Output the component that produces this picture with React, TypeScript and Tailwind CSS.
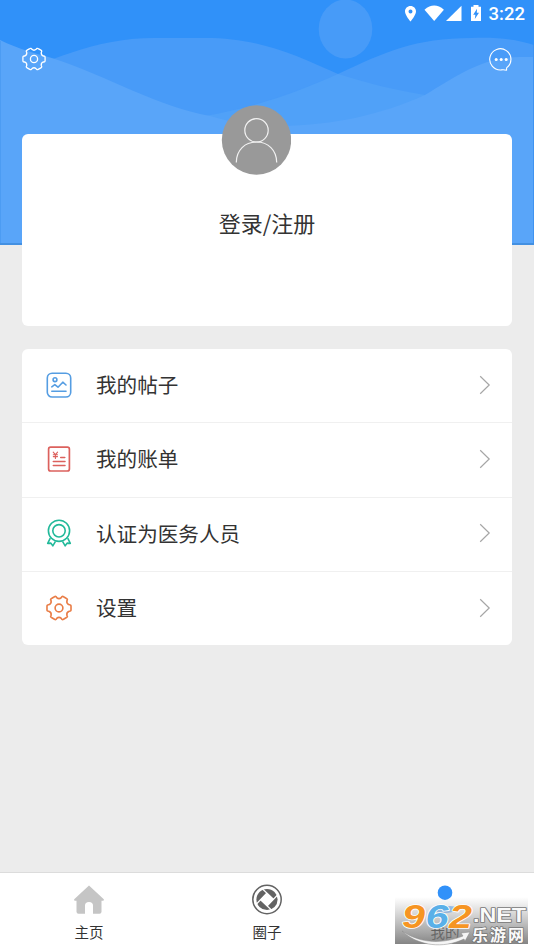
import type { ReactNode } from "react";
import clsx from "clsx";

// Six rounded teeth around (12, 12)
function buildGearPath() {
  const point = (radius: number, degrees: number) => {
    const angle = (degrees * Math.PI) / 180;
    return `${(12 + radius * Math.cos(angle)).toFixed(2)} ${(12 + radius * Math.sin(angle)).toFixed(2)}`;
  };
  let path = `M${point(9.9, -17.5)}`;
  for (let a = 0; a < 360; a += 60) {
    path += ` Q${point(11.6, a - 16)} ${point(11.2, a - 8)}`;
    path += ` L${point(11.2, a + 8)} Q${point(11.6, a + 16)} ${point(9.9, a + 17.5)}`;
    path += ` Q${point(7.8, a + 30)} ${point(9.9, a + 42.5)}`;
  }
  return path + " Z";
}

const gearPath = buildGearPath();

function GearIcon({ className, strokeWidth = 1.5 }: { className?: string; strokeWidth?: number }) {
  return (
    <svg viewBox="0 0 24 24" className={className} fill="none" stroke="currentColor" strokeWidth={strokeWidth} strokeLinejoin="round">
      <path d={gearPath} />
      <circle cx="12" cy="12" r="3.6" />
    </svg>
  );
}

function PostIcon() {
  return (
    <svg viewBox="0 0 26 26" className="w-[26px] h-[26px]" fill="none" stroke="#559de2" strokeWidth="1.6" strokeLinecap="round" strokeLinejoin="round">
      <rect x="1.3" y="1.2" width="23.4" height="23.8" rx="4.8" />
      <circle cx="9" cy="7.7" r="1.9" />
      <path d="M5.8 14.8 L8.8 12.6 L12 15.2 L16.8 10.2 L20 13" />
      <path d="M5.8 19.2 H20" />
    </svg>
  );
}

function BillIcon() {
  return (
    <svg viewBox="0 0 26 26" className="w-[26px] h-[26px]" fill="none" stroke="#dc615d" strokeWidth="1.5" strokeLinecap="round">
      <rect x="2.6" y="1.2" width="20.8" height="23.8" rx="2" strokeWidth="1.7" />
      <path d="M7.2 6.2 L9.4 8.6 L11.6 6.2 M9.4 8.6 V12.4 M7.3 8.8 H11.5 M7.3 10.6 H11.5" strokeWidth="1.1" />
      <path d="M14.7 11.4 H18.8 M7.3 15.4 H19 M7.3 19.4 H19" />
    </svg>
  );
}

function MedalIcon() {
  return (
    <svg viewBox="0 0 26 28" className="w-[26px] h-[28px]" fill="none" stroke="#22b99a" strokeWidth="1.6" strokeLinejoin="round">
      <circle cx="13" cy="11.8" r="10.6" />
      <circle cx="13" cy="11.8" r="6.2" />
      <path d="M4.3 19.2 L1.7 24.4 L4.9 24.1 L6.8 26.8 L9.5 22.3" />
      <path d="M21.7 19.2 L24.3 24.4 L21.1 24.1 L19.2 26.8 L16.5 22.3" />
    </svg>
  );
}

function ChevronIcon() {
  return (
    <svg viewBox="0 0 12 20" className="w-3 h-5" fill="none" stroke="#a6a6a6" strokeWidth="1.2">
      <path d="M1.2 1.3 L10.2 10 L1.2 18.7" />
    </svg>
  );
}

function HeaderBackground() {
  return (
    <svg viewBox="0 0 534 245" className="absolute left-0 top-0 w-[534px] h-[245px]">
      <rect width="534" height="245" fill="#3091f9" />
      <ellipse cx="345.5" cy="29" rx="26.8" ry="29.5" fill="#479bf8" />
      <path d="M0 78 C50 63 90 38 155 38 H205 C260 38 295 55 338 74 C370 84 395 90 425 95 L460 160 H0 Z" fill="#489bf8" />
      <path d="M190 120 C250 108 290 94 338 74 C385 52 415 38 472 38 C500 37 518 40 534 45 V160 H190 Z" fill="#489bf8" />
      <path d="M205 116 C260 106 295 93 338 74 C370 84 395 90 425 95 L400 140 H205 Z" fill="#50a1f8" />
      <path d="M0 40 C18 49 38 54 55 59 C105 75 158 107 210 116 C235 123 255 127 280 126 C335 125 380 115 425 95 C455 77 482 57 520 57 H534 V245 H0 Z" fill="#59a5f9" />
      <rect y="41" width="1" height="204" fill="#4c9cf3" />
      <rect x="533" y="45" width="1" height="200" fill="#4093f0" />
      <rect y="243" width="534" height="2" fill="#4390e2" />
    </svg>
  );
}

function StatusBar() {
  return (
    <div className="flex h-7 items-center justify-end pr-[9px] text-white">
      <svg viewBox="0 0 78 18" className="w-[78px] h-[18px]" fill="currentColor">
        <path fillRule="evenodd" d="M6.5 1 C3.3 1 1 3.4 1 6.5 C1 10.2 6.5 16.5 6.5 16.5 C6.5 16.5 12 10.2 12 6.5 C12 3.4 9.7 1 6.5 1 Z M6.5 4.5 A2 2 0 1 1 6.5 8.5 A2 2 0 1 1 6.5 4.5 Z" />
        <path d="M20.5 4.7 Q30.2 -3.5 39.9 4.7 L30.2 16 Z" />
        <path d="M57.5 0.8 V16 H42 Z" />
        <path fillRule="evenodd" d="M67 1.7 H69.5 V0 H74.5 V1.7 H77 V16 H67 Z M73 3.8 L69.2 9.7 H71.4 L70.8 14.1 L75 7.7 H72.8 Z" />
      </svg>
      <span className="ml-[7px] font-['Roboto',sans-serif] text-[18.5px] leading-7 font-medium">3:22</span>
    </div>
  );
}

function Watermark() {
  return (
    <svg viewBox="0 0 133 50" className="absolute left-[395px] top-[21px] w-[133px] h-[50px] overflow-visible">
      <defs>
        <linearGradient id="shade" x1="0" y1="0" x2="0" y2="1">
          <stop offset="0" stopColor="#888" stopOpacity="0" />
          <stop offset="1" stopColor="#777" stopOpacity="0.9" />
        </linearGradient>
      </defs>
      <rect y="3" width="133" height="47" fill="url(#shade)" />
      <path d="M7 37 C26 50 48 50 68 42 L66 39 L75 38 L70 47 L69 45 C48 55 23 52 7 37 Z" fill="#f5f5f5" stroke="#888" strokeWidth="0.5" />
      <g fontFamily="Liberation Sans, Arial, sans-serif" fontWeight="bold" fontStyle="italic" fontSize="33" paintOrder="stroke" stroke="#fff" strokeWidth="1.6" strokeLinejoin="round">
        <text x="7" y="33.5" textLength="23" lengthAdjust="spacingAndGlyphs" fill="#f69523">9</text>
        <text x="30.5" y="33.5" textLength="23" lengthAdjust="spacingAndGlyphs" fill="#5ab0e8">6</text>
        <text x="54" y="33.5" textLength="23" lengthAdjust="spacingAndGlyphs" fill="#f69523">2</text>
      </g>
      <g fontWeight="bold" fill="#fafafa" paintOrder="stroke" strokeLinejoin="round" stroke="#777" strokeWidth="1.6">
        <text x="78" y="28" fontFamily="Liberation Sans, Arial, sans-serif" fontSize="19.5" textLength="53" lengthAdjust="spacingAndGlyphs">.NET</text>
        <text x="77" y="47" fontFamily="Noto Sans CJK SC, sans-serif" fontSize="16" textLength="52">乐游网</text>
      </g>
    </svg>
  );
}

interface MenuItem {
  label: string;
  icon: ReactNode;
}

const menuItems: MenuItem[] = [
  { label: "我的帖子", icon: <PostIcon /> },
  { label: "我的账单", icon: <BillIcon /> },
  { label: "认证为医务人员", icon: <MedalIcon /> },
  { label: "设置", icon: <GearIcon className="w-[26px] h-[26px] text-[#e97e48]" strokeWidth={1.5} /> },
];

const tabs: MenuItem[] = [
  {
    label: "主页",
    icon: (
      <svg viewBox="0 0 32 32" className="w-8 h-8" fill="#c5c5c5">
        <path d="M16 1.5 L30.8 15.3 Q31.5 16.7 30 16.7 H28.5 V27.8 Q28.5 29.8 26.5 29.8 H20 V21.5 Q20 18 16 18 Q12 18 12 21.5 V29.8 H5.5 Q3.5 29.8 3.5 27.8 V16.7 H2 Q0.5 16.7 1.2 15.3 Z" />
      </svg>
    ),
  },
  {
    label: "圈子",
    icon: (
      <svg viewBox="0 0 32 32" className="w-8 h-8" fill="none">
        <circle cx="16" cy="15.5" r="14.2" stroke="#636363" strokeWidth="1.5" />
        <circle cx="16" cy="15.5" r="10.6" fill="#636363" />
        <path d="M16 8.8 L22.7 15.5 L16 22.2 L9.3 15.5 Z" fill="#fff" />
        <path d="M11 4.5 L22.7 15.5 M27 10.5 L16 22.2 M21 26.5 L9.3 15.5 M5 20.5 L16 8.8" stroke="#fff" strokeWidth="1.2" />
      </svg>
    ),
  },
  {
    label: "我的",
    icon: (
      <svg viewBox="0 0 32 32" className="w-8 h-8" fill="#3191f9">
        <circle cx="16" cy="8.7" r="7.3" />
        <path d="M6 28 Q8 21 16 22.5 Q24 21 30 24.5 Q24 29 16 29 Z" fillOpacity="0.5" />
      </svg>
    ),
  },
];

export default function App() {
  return (
    <div className="relative flex h-[950px] w-[534px] flex-col overflow-hidden bg-[#ececec] font-['Noto_Sans_CJK_SC',sans-serif] text-[#333]">
      <HeaderBackground />

      <div className="relative flex flex-1 flex-col">
        <StatusBar />

        <div className="flex h-[105.5px] items-start justify-between px-[21.5px] pt-[19px] text-white">
          <GearIcon className="w-6 h-6" strokeWidth={1.3} />
          <svg viewBox="0 0 24 24" className="w-6 h-6" fill="none" stroke="currentColor" strokeWidth="1.1" strokeLinejoin="round">
            <path d="M17.6 20.9 A10.6 10.6 0 1 0 12.2 22.9 Q15 22.6 17.6 23.2 Z" />
            <g fill="currentColor" stroke="none">
              <circle cx="7.2" cy="12.5" r="1.5" />
              <circle cx="12.2" cy="12.5" r="1.5" />
              <circle cx="17.2" cy="12.5" r="1.5" />
            </g>
          </svg>
        </div>

        {/* Profile card */}
        <div className="relative mx-[22px] flex h-[192.5px] justify-center rounded-[6px] bg-white pt-[72px]">
          <svg viewBox="0 0 70 70" className="absolute -top-[28.5px] left-[199px] w-[70px] h-[70px]" fill="none" stroke="#f2f2f2" strokeWidth="1.2">
            <circle cx="35.5" cy="35" r="34.7" fill="#999" stroke="none" />
            <circle cx="35.5" cy="25.3" r="11.7" />
            <path d="M15.3 57.5 C15.3 45 24 37 35.5 37 C47 37 55.7 45 55.7 57.5" />
          </svg>
          <span className="text-[22px] leading-8">登录/注册</span>
        </div>

        {/* Menu */}
        <div className="mx-[22px] mt-[23px] flex h-[296px] flex-col overflow-hidden rounded-[6px] bg-white">
          {menuItems.map((item, index) => (
            <div
              key={item.label}
              className={clsx("flex flex-1 items-center pl-6 pr-[21px] pb-[1.5px]", index > 0 && "border-t border-[#f0f0f0]")}
            >
              <div className="flex w-[26px] justify-center">{item.icon}</div>
              <span className="ml-6 flex-1 pb-[1.5px] text-[20.6px] leading-8">{item.label}</span>
              <ChevronIcon />
            </div>
          ))}
        </div>
      </div>

      {/* Tab bar */}
      <div className="relative flex h-[78px] border-t border-[#dcdcdc] bg-white">
        {tabs.map((tab) => (
          <div key={tab.label} className="flex flex-1 flex-col items-center pt-[11px]">
            {tab.icon}
            <span className="mt-[6px] text-[14.5px] leading-5">{tab.label}</span>
          </div>
        ))}
        <Watermark />
      </div>
    </div>
  );
}
